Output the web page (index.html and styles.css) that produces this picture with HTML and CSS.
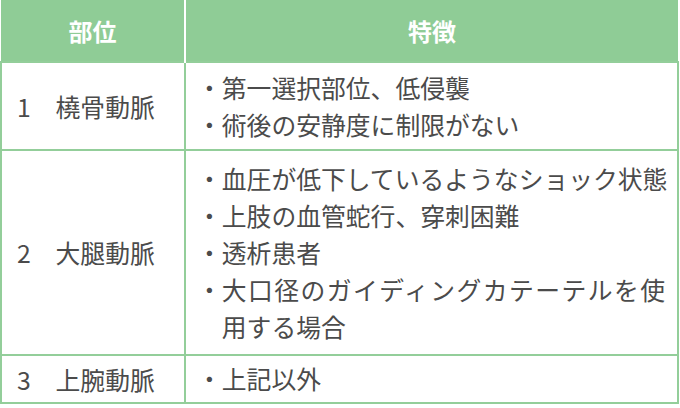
FILE: index.html
```html
<!DOCTYPE html>
<html lang="ja">
<head>
<meta charset="utf-8">
<link rel="stylesheet" href="styles.css">
</head>
<body>
<table class="sites">
  <thead>
    <tr>
      <th class="col-site">部位</th>
      <th class="col-feat">特徴</th>
    </tr>
  </thead>
  <tbody>
    <tr class="r1">
      <td class="site">1　橈骨動脈</td>
      <td class="feat tight">
        <div class="item"><span class="dot">・</span><span class="txt">第一選択部位、低侵襲</span></div>
        <div class="item"><span class="dot">・</span><span class="txt">術後の安静度に制限がない</span></div>
      </td>
    </tr>
    <tr class="r2">
      <td class="site">2　大腿動脈</td>
      <td class="feat">
        <div class="item"><span class="dot">・</span><span class="txt">血圧が低下しているようなショック状態</span></div>
        <div class="item"><span class="dot">・</span><span class="txt">上肢の血管蛇行、穿刺困難</span></div>
        <div class="item"><span class="dot">・</span><span class="txt">透析患者</span></div>
        <div class="item"><span class="dot">・</span><span class="txt"><span class="just">大口径のガイディングカテーテルを使</span><span class="cont">用する場合</span></span></div>
      </td>
    </tr>
    <tr class="r3">
      <td class="site">3　上腕動脈</td>
      <td class="feat short">
        <div class="item"><span class="dot">・</span><span class="txt">上記以外</span></div>
      </td>
    </tr>
  </tbody>
</table>
</body>
</html>
```
FILE: styles.css
```css
html, body {
  margin: 0;
  padding: 0;
  background: #ffffff;
}

body {
  font-family: "Noto Sans CJK JP", "Noto Sans", sans-serif;
  color: #4b4b4b;
}

.sites {
  border-collapse: collapse;
  width: 679px;
  table-layout: fixed;
}

.sites th {
  background: #8fcc96;
  color: #ffffff;
  font-weight: 700;
  font-size: 24px;
  height: 61px;
  padding: 0;
  line-height: 30px;
  text-align: center;
  vertical-align: middle;
  border-left: 2px solid #ffffff;
}

.sites th.col-site {
  width: 183px;
  border-left: none;
}

.sites td {
  border: 2.5px solid #93ce9a;
  font-size: 24.8px;
  vertical-align: middle;
}

.site {
  padding: 0 0 0 15px;
  line-height: 37px;
  white-space: nowrap;
}

.feat {
  padding: 9px 12px 9px 20px;
}

.feat.tight {
  padding: 6px 12px 6px 20px;
}

.feat.short {
  padding: 4px 12px 5px 20px;
}

.item {
  display: flex;
  line-height: 37px;
  white-space: nowrap;
}

.dot {
  flex: 0 0 24px;
  margin-left: -9px;
}

.txt {
  flex: 1;
  display: flex;
  flex-direction: column;
}

.just {
  display: block;
  text-align: justify;
  text-align-last: justify;
}

.cont {
  display: block;
}
```
